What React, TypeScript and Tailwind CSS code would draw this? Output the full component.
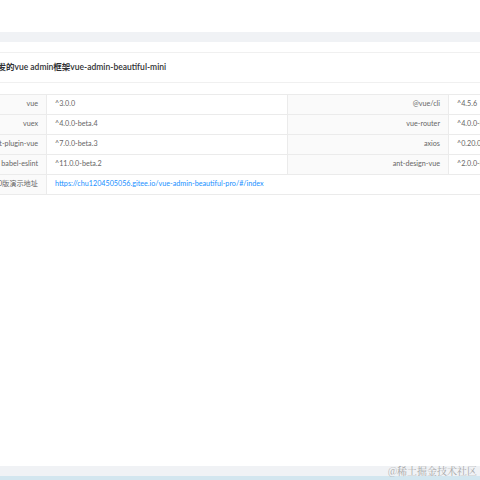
import React from "react";

const rows = [
  ["vue", "^3.0.0", "@vue/cli", "^4.5.6"],
  ["vuex", "^4.0.0-beta.4", "vue-router", "^4.0.0-beta.11"],
  ["eslint-plugin-vue", "^7.0.0-beta.3", "axios", "^0.20.0"],
  ["babel-eslint", "^11.0.0-beta.2", "ant-design-vue", "^2.0.0-beta.10"],
];

function Label({ children }: { children: React.ReactNode }) {
  return (
    <div className="h-5 flex items-center justify-end px-2 bg-[#fafafa] border-r border-b border-[#ebebeb] text-[#666] whitespace-nowrap">
      {children}
    </div>
  );
}

function Value({ children, className = "" }: { children: React.ReactNode; className?: string }) {
  return (
    <div
      className={
        "h-5 flex items-center px-2 border-r border-b border-[#ebebeb] text-[#666] whitespace-nowrap overflow-hidden " +
        className
      }
    >
      {children}
    </div>
  );
}

export default function App() {
  return (
    <div className="relative w-[480px] h-[480px] overflow-hidden bg-white font-['Lato','Noto_Sans_CJK_SC',sans-serif] text-[7.2px]">
      <div className="h-8 bg-white" />
      <div className="h-[10px] bg-[#f0f2f5]" />
      <div className="h-[10px]" />

      {/* card */}
      <div className="h-[414px] border-t border-[#f0f0f0]">
        <div className="h-[30px] flex items-center border-b border-[#f0f0f0]">
          <span className="-ml-[11px] text-[8.5px] font-semibold text-[#303133] whitespace-nowrap">
            开发的vue admin框架vue-admin-beautiful-mini
          </span>
        </div>

        <div className="pt-[11px]">
          <div className="-ml-[34px] grid grid-cols-[80px_241px_161px_120px] border-t border-l border-[#ebebeb] w-max">
            {rows.map((r) => (
              <React.Fragment key={r[0]}>
                <Label>{r[0]}</Label>
                <Value>{r[1]}</Value>
                <Label>{r[2]}</Label>
                <Value>{r[3]}</Value>
              </React.Fragment>
            ))}
            <Label>vue3.0版演示地址</Label>
            <Value className="col-span-3">
              <a href="#" className="text-[#1890ff]">
                https://chu1204505056.gitee.io/vue-admin-beautiful-pro/#/index
              </a>
            </Value>
          </div>
        </div>
      </div>

      <div className="h-[10px] bg-[#f0f2f5]" />
      <div className="h-[4px] bg-[#d3e6ef]" />

      <span className="absolute right-[3px] bottom-[4px] text-[10px] leading-none text-[#a8a8a8] font-['Noto_Serif_CJK_SC','Noto_Sans_CJK_SC',serif]">
        @稀土掘金技术社区
      </span>
    </div>
  );
}
